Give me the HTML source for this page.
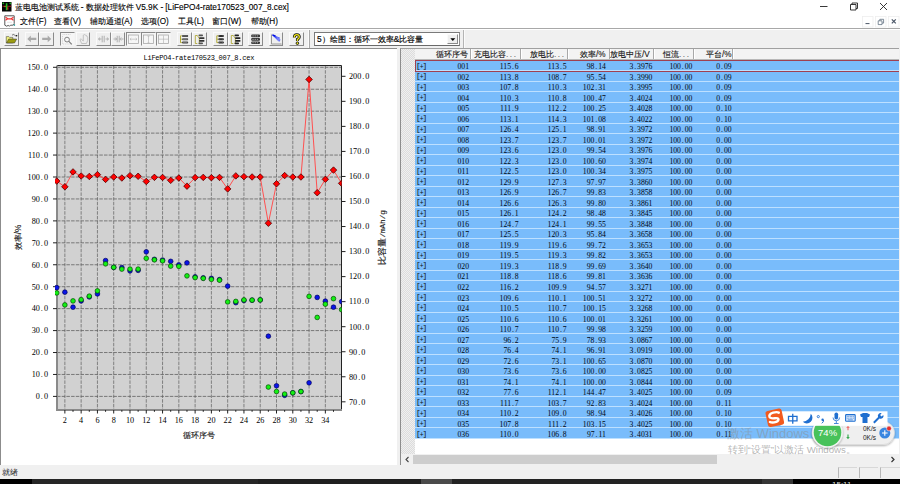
<!DOCTYPE html>
<html><head><meta charset="utf-8">
<style>
html,body{margin:0;padding:0;}
body{width:900px;height:484px;overflow:hidden;position:relative;background:#f0f0f0;font-family:"Liberation Sans",sans-serif;color:#000;}
.abs{position:absolute;}
#title{left:0;top:0;width:900px;height:14px;background:#fff;}
#menu{left:0;top:14px;width:900px;height:14px;background:#fff;}
.ttl{position:absolute;left:15px;top:2px;letter-spacing:-0.05px;font-size:8.3px;line-height:11px;white-space:nowrap;color:#000;-webkit-text-stroke:0.12px #000;}
.mi{position:absolute;top:17px;font-size:8.2px;line-height:10px;white-space:nowrap;color:#000;-webkit-text-stroke:0.12px #000;}
#tb{left:0;top:28px;width:900px;height:20px;background:#f0f0f0;border-top:1px solid #a8a8a8;box-sizing:border-box;}
.btn{position:absolute;top:31.8px;width:14.6px;height:14px;background:#efefef;border-top:1px solid #fafafa;border-left:1px solid #fafafa;border-right:1.3px solid #8a8a8a;border-bottom:1.3px solid #8a8a8a;box-sizing:border-box;}
.btn.dn{border-top:1.5px solid #8a8a8a;border-left:1.5px solid #8a8a8a;border-right:1px solid #f4f4f4;border-bottom:1px solid #f4f4f4;background:#f6f6f6;}
.btn svg{position:absolute;left:0;top:0;}
#lpane{left:0;top:48px;width:397px;height:417px;background:#fff;border-top:1px solid #8c8c8c;border-left:1.5px solid #8c8c8c;box-sizing:border-box;}
#rpane{left:400px;top:48px;width:499px;height:417px;background:#fff;border-top:1px solid #a0a0a0;border-left:1px solid #8c8c8c;box-sizing:border-box;}
#dith{left:401px;top:49px;width:14px;height:405px;background-color:#f0f0f0;background-image:repeating-conic-gradient(#dcdcdc 0 25%,#efefef 0 50%);background-size:2px 2px;}
#hdr{left:415px;top:49px;width:484px;height:10px;background:#f3f3f3;border-bottom:1px solid #b8b8b8;box-sizing:content-box;}
.hd{position:absolute;top:50px;font-size:8.2px;line-height:9px;white-space:nowrap;color:#111;-webkit-text-stroke:0.1px #111;}
.el{letter-spacing:1.6px;color:#666;-webkit-text-stroke:0;}
.hdiv{position:absolute;top:49px;width:1px;height:10px;background:#a8a8a8;border-right:1px solid #fff;}
.row{position:absolute;left:415px;width:484px;height:10.51px;background:#79bcfb;border-bottom:1px solid #bde0ff;box-sizing:border-box;}
.tc{position:absolute;top:2.8px;font-family:"Liberation Serif",serif;font-size:7.7px;line-height:8px;color:#000814;white-space:nowrap;}
.pd{display:inline-block;width:3.8px;text-align:center;}
.ex{position:absolute;left:0.9px;top:1.2px;font-family:"Liberation Mono",monospace;font-size:7.8px;letter-spacing:-0.9px;line-height:8px;color:#111;}
.ex i{font-style:normal;font-size:6.4px;position:relative;top:1px;}
.num{font-family:"Liberation Serif",serif;font-size:8.2px;fill:#000;}
.mono{font-family:"Liberation Mono",monospace;font-size:7px;letter-spacing:-0.25px;fill:#000;}
svg text.cjk{font-family:"Liberation Sans",sans-serif;font-size:8.2px;fill:#111;stroke:#111;stroke-width:0.12px;}
#hs{left:401px;top:454px;width:498px;height:10.5px;background:#f0f0f0;}
#thumb{left:413px;top:455px;width:304px;height:8.5px;background:#cdcdcd;}
#status{left:0;top:465px;width:900px;height:14px;background:#f0f0f0;}
#task{left:0;top:479px;width:900px;height:5px;background:#262626;}
</style></head><body>
<div id="title" class="abs">
  <svg class="abs" style="left:2px;top:2px" width="10" height="10"><rect width="9.5" height="9.5" fill="#050505"/><path d="M0.5 4.3H9.2" stroke="#c02020" stroke-width="0.8"/><path d="M4.6 1.2v7" stroke="#22c022" stroke-width="1.6"/><circle cx="1.3" cy="1.3" r="0.9" fill="#22b022"/><circle cx="8.3" cy="1.3" r="0.9" fill="#22b022"/><path d="M5.8 5.2v2.5" stroke="#e03030" stroke-width="1.1"/><circle cx="3" cy="4.5" r="0.7" fill="#a0a020"/></svg>
  <div class="ttl">蓝电电池测试系统 - 数据处理软件 V5.9K - [LiFePO4-rate170523_007_8.cex]</div>
  <svg class="abs" style="left:815px;top:0" width="85" height="14">
    <path d="M5 6.5H12.5" stroke="#222" stroke-width="0.9"/>
    <path d="M35.5 4.5h5.5v5.5h-5.5z M37 4.5V3h5.5v5.5H41" stroke="#222" stroke-width="0.9" fill="none"/>
    <path d="M65 3L72 10M72 3L65 10" stroke="#222" stroke-width="0.9"/>
  </svg>
</div>
<div id="menu" class="abs">
  <svg class="abs" style="left:4px;top:1px" width="12" height="13"><path d="M0.8 0.8H10.2V8.6L8.8 10.2H6.5L5.5 11.2L4.2 10.4L2.6 11.2L0.8 10.2Z" fill="#fff" stroke="#444" stroke-width="0.9"/><path d="M1.5 2.2L3.8 3.8L1.5 5.2M9.5 2.2L7.2 3.8L9.5 5.2M3.6 3.8H7.4" stroke="#f03030" stroke-width="1.2" fill="none"/><path d="M3 7.3h5" stroke="#ccc" stroke-width="0.5"/><circle cx="10.3" cy="10" r="0.9" fill="#40a0a0"/></svg>
</div>
<div class="mi" style="left:20px">文件(F)</div>
<div class="mi" style="left:54px">查看(V)</div>
<div class="mi" style="left:89.5px">辅助通道(A)</div>
<div class="mi" style="left:141px">选项(O)</div>
<div class="mi" style="left:178px">工具(L)</div>
<div class="mi" style="left:212px">窗口(W)</div>
<div class="mi" style="left:250.5px">帮助(H)</div>
<svg class="abs" style="left:860px;top:15px" width="40" height="13">
  <rect x="2.5" y="1.5" width="10.5" height="10.5" fill="#fff" stroke="#eeeeee" stroke-width="0.8"/>
  <rect x="15.5" y="1.5" width="10.5" height="10.5" fill="#fff" stroke="#eeeeee" stroke-width="0.8"/>
  <rect x="28.5" y="1.5" width="10.5" height="10.5" fill="#fff" stroke="#eeeeee" stroke-width="0.8"/>
  <path d="M5.5 8.6H9.5" stroke="#4a5566" stroke-width="1"/>
  <path d="M18.2 5.8h3.8v3.8h-3.8z M19.8 5.8V4.3h3.8v3.8h-1.6" stroke="#607080" stroke-width="0.8" fill="none"/>
  <path d="M31.8 4.3L35.8 8.3M35.8 4.3L31.8 8.3" stroke="#4a5566" stroke-width="1.2"/>
</svg>
<div id="tb" class="abs"></div>
<svg class="abs" style="left:0;top:29px" width="900" height="2"><path d="M0 0.5H900" stroke="#fff" stroke-width="1"/></svg>
<div class="btn" style="left:4.2px"><svg width="14" height="14" viewBox="0 0 14 14"><path d="M1.3 3.6h2.5l0.8 0.8h3.2v5.5H1.3z" fill="#f2f27a" stroke="#333" stroke-width="0.5"/><path d="M1.5 10l2.2-4h8l-2.2 4z" fill="#9c9c12" stroke="#333" stroke-width="0.5"/><path d="M7 2.3q1.2-1.6 2.4-0.3t2.3 0.4" stroke="#222" stroke-width="0.6" fill="none"/><circle cx="11.6" cy="2.8" r="0.8" fill="#111"/></svg></div>
<div class="btn" style="left:24.7px"><svg width="14" height="14" viewBox="0 0 14 14"><path d="M1.3 5.9l3.5-3.4v2.3h5.5v2.2H4.8v2.3z" fill="#a9a9a9"/></svg></div>
<div class="btn" style="left:39.3px"><svg width="14" height="14" viewBox="0 0 14 14"><path d="M11.2 5.9l-3.5-3.4v2.3H2.2v2.2h5.5v2.3z" fill="#a9a9a9"/></svg></div>
<div class="btn dn" style="left:60.0px"><svg width="14" height="14" viewBox="0 0 14 14"><path d="M1.5 1.5h8M1.5 3v8M2 11h8" stroke="#b0b0b0" stroke-width="0.5" stroke-dasharray="1 0.8"/><circle cx="6" cy="6.6" r="2.4" fill="none" stroke="#777" stroke-width="0.9"/><path d="M7.8 8.4l3 3" stroke="#777" stroke-width="1.1"/></svg></div>
<div class="btn" style="left:75.6px"><svg width="14" height="14" viewBox="0 0 14 14"><path d="M3 6.5l1.6 4h4.8l1.3-3V4.5q0-1-0.8-0.8V3.4q0-1-0.8-0.8q-0.2-0.8-1.1-0.6q-0.4-0.7-1.1-0.2q-0.7 0-0.6 0.9v5.3L4.5 6.3q-1-0.6-1.5 0.2z" fill="none" stroke="#b0b0b0" stroke-width="0.7"/></svg></div>
<div class="btn" style="left:96.0px"><svg width="14" height="14" viewBox="0 0 14 14"><path d="M1.5 6h3M8.5 6h3M5.2 2.8v6.5M7.2 2.8v6.5M1.5 6l1.6-1.5M1.5 6l1.6 1.5M11.5 6l-1.6-1.5M11.5 6l-1.6 1.5" stroke="#a0a0a0" stroke-width="0.8" fill="none"/></svg></div>
<div class="btn" style="left:110.8px"><svg width="14" height="14" viewBox="0 0 14 14"><path d="M1.5 6h3M8.5 6h3M5.2 2.8v6.5M7.2 2.8v6.5M4.7 6l-1.5-1.5M4.7 6l-1.5 1.5M7.7 6l1.5-1.5M7.7 6l1.5 1.5" stroke="#a0a0a0" stroke-width="0.8" fill="none"/></svg></div>
<div class="btn dn" style="left:126.0px"><svg width="14" height="14" viewBox="0 0 14 14"><rect x="1.5" y="2" width="10" height="8.5" fill="none" stroke="#a8a8a8" stroke-width="0.8"/><path d="M3 6.2h7M3 6.2l1.3-1.2M3 6.2l1.3 1.2M10 6.2l-1.3-1.2M10 6.2l-1.3 1.2" stroke="#b0b0b0" stroke-width="0.6" fill="none"/></svg></div>
<div class="btn dn" style="left:141.0px"><svg width="14" height="14" viewBox="0 0 14 14"><rect x="1.5" y="2" width="10" height="8.5" fill="none" stroke="#a8a8a8" stroke-width="0.8"/><path d="M6.5 3v7M5.3 3h2.4M5.3 10h2.4" stroke="#b0b0b0" stroke-width="0.6" fill="none"/></svg></div>
<div class="btn dn" style="left:156.0px"><svg width="14" height="14" viewBox="0 0 14 14"><rect x="1.5" y="2" width="10" height="8.5" fill="none" stroke="#a8a8a8" stroke-width="0.8"/><path d="M6.5 2.5v7.5M2 6.2h9" stroke="#b0b0b0" stroke-width="0.6" fill="none"/></svg></div>
<div class="btn" style="left:177.2px"><svg width="14" height="14" viewBox="0 0 14 14"><path d="M2.5 2.8v6.8M2.5 2.8h1.3M2.5 6.2h1.3M2.5 9.6h1.3" stroke="#a8a020" stroke-width="0.9" fill="none"/><rect x="4" y="2" width="6.2" height="1.9" rx="0.9" fill="#444"/><rect x="4" y="5.3" width="6.2" height="1.9" rx="0.9" fill="#555"/><rect x="4" y="8.6" width="6.2" height="1.9" rx="0.9" fill="#444"/><path d="M5 2.9h4.2M5 6.2h4.2M5 9.5h4.2" stroke="#aaa" stroke-width="0.4"/></svg></div>
<div class="btn" style="left:192.0px"><svg width="14" height="14" viewBox="0 0 14 14"><path d="M2.3 2.5v8h2M2.3 2.5h2l2 3v5" stroke="#a8a020" stroke-width="0.8" fill="none"/><rect x="5.5" y="1.5" width="4.5" height="1.7" rx="0.8" fill="#555"/><rect x="6" y="4.3" width="5.5" height="1.7" rx="0.8" fill="#333"/><rect x="6" y="7" width="5.5" height="1.7" rx="0.8" fill="#333"/><rect x="5.5" y="9.6" width="4.5" height="1.7" rx="0.8" fill="#555"/></svg></div>
<div class="btn" style="left:213.0px"><svg width="14" height="14" viewBox="0 0 14 14"><path d="M2.8 2.8v6.8M2.8 2.8h1.3M2.8 6.2h1.3M2.8 9.6h1.3" stroke="#a8a020" stroke-width="0.9" fill="none"/><rect x="4.3" y="2" width="5.6" height="1.9" rx="0.9" fill="#222"/><rect x="4.3" y="5.3" width="5.6" height="1.9" rx="0.9" fill="#222"/><rect x="4.3" y="8.6" width="5.6" height="1.9" rx="0.9" fill="#222"/><path d="M5.2 2.9h3.8M5.2 6.2h3.8M5.2 9.5h3.8" stroke="#ccc" stroke-width="0.4" stroke-dasharray="0.8 0.6"/></svg></div>
<div class="btn" style="left:228.0px"><svg width="14" height="14" viewBox="0 0 14 14"><path d="M2.3 2.5v8h2M2.3 2.5h2l2 3v5" stroke="#a8a020" stroke-width="0.8" fill="none"/><rect x="5.5" y="1.5" width="4.5" height="1.7" rx="0.8" fill="#222"/><rect x="6" y="4.3" width="5.5" height="1.7" rx="0.8" fill="#222"/><rect x="6" y="7" width="5.5" height="1.7" rx="0.8" fill="#222"/><rect x="5.5" y="9.6" width="4.5" height="1.7" rx="0.8" fill="#222"/></svg></div>
<div class="btn" style="left:248.0px"><svg width="14" height="14" viewBox="0 0 14 14"><rect x="2.2" y="1.6" width="8.8" height="2.7" rx="1" fill="#333"/><rect x="2.2" y="5" width="8.8" height="2.7" rx="1" fill="#333"/><rect x="2.2" y="8.4" width="8.8" height="2.7" rx="1" fill="#333"/><path d="M3.4 2.95h6.4M3.4 6.35h6.4M3.4 9.75h6.4" stroke="#e0e0e0" stroke-width="0.7" stroke-dasharray="1.3 0.9"/></svg></div>
<div class="btn" style="left:268.5px"><svg width="14" height="14" viewBox="0 0 14 14"><path d="M1.5 1.5v9.5h10" stroke="#8a8a8a" stroke-width="0.9" fill="none"/><path d="M2.5 2l7.5 3.2M2.8 2.2l7.6 4.6M3 2.4l7 5.6M3.2 2.6l6 6" stroke="#2030ff" stroke-width="0.7" fill="none"/><path d="M2.5 1.8l3 1.4" stroke="#0010e0" stroke-width="1.4"/><path d="M2.5 11.6h9" stroke="#c4c4c4" stroke-width="0.9"/></svg></div>
<div class="btn" style="left:289.0px"><svg width="14" height="14" viewBox="0 0 14 14"><path d="M4.3 4.4q0-2.8 2.5-2.8t2.5 2.4q0 1.6-1.9 2.4v1.6" stroke="#111" stroke-width="2.9" fill="none"/><path d="M4.3 4.4q0-2.8 2.5-2.8t2.5 2.4q0 1.6-1.9 2.4v1.6" stroke="#f0e818" stroke-width="1.3" fill="none"/><circle cx="7.4" cy="10.2" r="1.3" fill="#f0e818" stroke="#111" stroke-width="0.9"/></svg></div>
<div class="abs" style="left:307.5px;top:30px;width:1px;height:18px;background:#fbfbfb;border-right:1.5px solid #a8a8a8"></div>
<div class="abs" style="left:314px;top:32px;width:145.5px;height:13.5px;background:#fff;border-top:1.3px solid #7a7a7a;border-left:1.3px solid #7a7a7a;border-right:1px solid #8a8a8a;border-bottom:1px solid #6a6a6a;box-sizing:border-box;"></div>
<div class="abs" style="left:462.5px;top:30px;width:1px;height:18px;background:#b4b4b4;border-right:1px solid #fbfbfb"></div>
<div class="abs" style="left:317px;top:34px;font-size:8.4px;line-height:10px;white-space:nowrap;color:#000;-webkit-text-stroke:0.15px #000">5）绘图：循环一效率&amp;比容量</div>
<div class="btn" style="left:446.5px;top:33.8px;width:11px;height:10px"><svg width="10" height="9"><path d="M2.3 3.3h5l-2.5 2.6z" fill="#000"/></svg></div>
<div id="lpane" class="abs"></div>
<div id="rpane" class="abs"></div>
<div id="dith" class="abs"></div>
<div id="hdr" class="abs"></div>
<div class="hd" style="left:435.5px">循环序号</div>
<div class="hdiv" style="left:469.5px"></div>
<div class="hd" style="left:474px">充电比容<span class="el">...</span></div>
<div class="hdiv" style="left:519.5px"></div>
<div class="hd" style="left:530px">放电比<span class="el">...</span></div>
<div class="hdiv" style="left:567px"></div>
<div class="hd" style="left:580px">效率/%</div>
<div class="hdiv" style="left:608.5px"></div>
<div class="hd" style="left:610px">放电中压/V</div>
<div class="hdiv" style="left:652.5px"></div>
<div class="hd" style="left:663px">恒流<span class="el">...</span></div>
<div class="hdiv" style="left:692.5px"></div>
<div class="hd" style="left:706px">平台/%</div>
<div class="hdiv" style="left:731.5px"></div>
<div class="row" style="top:60.50px"><span class="ex">[<i>+</i>]</span><span class="tc" style="right:430.0px">001</span><span class="tc" style="right:380.3px">115<span class="pd">.</span>6</span><span class="tc" style="right:332.3px">113<span class="pd">.</span>5</span><span class="tc" style="right:293.2px">98<span class="pd">.</span>14</span><span class="tc" style="right:246.6px">3<span class="pd">.</span>3976</span><span class="tc" style="right:206.6px">100<span class="pd">.</span>00</span><span class="tc" style="right:167.4px">0<span class="pd">.</span>09</span></div>
<div class="row" style="top:71.01px"><span class="ex">[<i>+</i>]</span><span class="tc" style="right:430.0px">002</span><span class="tc" style="right:380.3px">113<span class="pd">.</span>8</span><span class="tc" style="right:332.3px">108<span class="pd">.</span>7</span><span class="tc" style="right:293.2px">95<span class="pd">.</span>54</span><span class="tc" style="right:246.6px">3<span class="pd">.</span>3990</span><span class="tc" style="right:206.6px">100<span class="pd">.</span>00</span><span class="tc" style="right:167.4px">0<span class="pd">.</span>09</span></div>
<div class="row" style="top:81.52px"><span class="ex">[<i>+</i>]</span><span class="tc" style="right:430.0px">003</span><span class="tc" style="right:380.3px">107<span class="pd">.</span>8</span><span class="tc" style="right:332.3px">110<span class="pd">.</span>3</span><span class="tc" style="right:293.2px">102<span class="pd">.</span>31</span><span class="tc" style="right:246.6px">3<span class="pd">.</span>3995</span><span class="tc" style="right:206.6px">100<span class="pd">.</span>00</span><span class="tc" style="right:167.4px">0<span class="pd">.</span>09</span></div>
<div class="row" style="top:92.03px"><span class="ex">[<i>+</i>]</span><span class="tc" style="right:430.0px">004</span><span class="tc" style="right:380.3px">110<span class="pd">.</span>3</span><span class="tc" style="right:332.3px">110<span class="pd">.</span>8</span><span class="tc" style="right:293.2px">100<span class="pd">.</span>47</span><span class="tc" style="right:246.6px">3<span class="pd">.</span>4024</span><span class="tc" style="right:206.6px">100<span class="pd">.</span>00</span><span class="tc" style="right:167.4px">0<span class="pd">.</span>09</span></div>
<div class="row" style="top:102.54px"><span class="ex">[<i>+</i>]</span><span class="tc" style="right:430.0px">005</span><span class="tc" style="right:380.3px">111<span class="pd">.</span>9</span><span class="tc" style="right:332.3px">112<span class="pd">.</span>2</span><span class="tc" style="right:293.2px">100<span class="pd">.</span>25</span><span class="tc" style="right:246.6px">3<span class="pd">.</span>4028</span><span class="tc" style="right:206.6px">100<span class="pd">.</span>00</span><span class="tc" style="right:167.4px">0<span class="pd">.</span>10</span></div>
<div class="row" style="top:113.05px"><span class="ex">[<i>+</i>]</span><span class="tc" style="right:430.0px">006</span><span class="tc" style="right:380.3px">113<span class="pd">.</span>1</span><span class="tc" style="right:332.3px">114<span class="pd">.</span>3</span><span class="tc" style="right:293.2px">101<span class="pd">.</span>08</span><span class="tc" style="right:246.6px">3<span class="pd">.</span>4022</span><span class="tc" style="right:206.6px">100<span class="pd">.</span>00</span><span class="tc" style="right:167.4px">0<span class="pd">.</span>10</span></div>
<div class="row" style="top:123.56px"><span class="ex">[<i>+</i>]</span><span class="tc" style="right:430.0px">007</span><span class="tc" style="right:380.3px">126<span class="pd">.</span>4</span><span class="tc" style="right:332.3px">125<span class="pd">.</span>1</span><span class="tc" style="right:293.2px">98<span class="pd">.</span>91</span><span class="tc" style="right:246.6px">3<span class="pd">.</span>3972</span><span class="tc" style="right:206.6px">100<span class="pd">.</span>00</span><span class="tc" style="right:167.4px">0<span class="pd">.</span>00</span></div>
<div class="row" style="top:134.07px"><span class="ex">[<i>+</i>]</span><span class="tc" style="right:430.0px">008</span><span class="tc" style="right:380.3px">123<span class="pd">.</span>7</span><span class="tc" style="right:332.3px">123<span class="pd">.</span>7</span><span class="tc" style="right:293.2px">100<span class="pd">.</span>01</span><span class="tc" style="right:246.6px">3<span class="pd">.</span>3972</span><span class="tc" style="right:206.6px">100<span class="pd">.</span>00</span><span class="tc" style="right:167.4px">0<span class="pd">.</span>00</span></div>
<div class="row" style="top:144.58px"><span class="ex">[<i>+</i>]</span><span class="tc" style="right:430.0px">009</span><span class="tc" style="right:380.3px">123<span class="pd">.</span>6</span><span class="tc" style="right:332.3px">123<span class="pd">.</span>0</span><span class="tc" style="right:293.2px">99<span class="pd">.</span>54</span><span class="tc" style="right:246.6px">3<span class="pd">.</span>3976</span><span class="tc" style="right:206.6px">100<span class="pd">.</span>00</span><span class="tc" style="right:167.4px">0<span class="pd">.</span>00</span></div>
<div class="row" style="top:155.09px"><span class="ex">[<i>+</i>]</span><span class="tc" style="right:430.0px">010</span><span class="tc" style="right:380.3px">122<span class="pd">.</span>3</span><span class="tc" style="right:332.3px">123<span class="pd">.</span>0</span><span class="tc" style="right:293.2px">100<span class="pd">.</span>60</span><span class="tc" style="right:246.6px">3<span class="pd">.</span>3974</span><span class="tc" style="right:206.6px">100<span class="pd">.</span>00</span><span class="tc" style="right:167.4px">0<span class="pd">.</span>00</span></div>
<div class="row" style="top:165.60px"><span class="ex">[<i>+</i>]</span><span class="tc" style="right:430.0px">011</span><span class="tc" style="right:380.3px">122<span class="pd">.</span>5</span><span class="tc" style="right:332.3px">123<span class="pd">.</span>0</span><span class="tc" style="right:293.2px">100<span class="pd">.</span>34</span><span class="tc" style="right:246.6px">3<span class="pd">.</span>3975</span><span class="tc" style="right:206.6px">100<span class="pd">.</span>00</span><span class="tc" style="right:167.4px">0<span class="pd">.</span>00</span></div>
<div class="row" style="top:176.11px"><span class="ex">[<i>+</i>]</span><span class="tc" style="right:430.0px">012</span><span class="tc" style="right:380.3px">129<span class="pd">.</span>9</span><span class="tc" style="right:332.3px">127<span class="pd">.</span>3</span><span class="tc" style="right:293.2px">97<span class="pd">.</span>97</span><span class="tc" style="right:246.6px">3<span class="pd">.</span>3860</span><span class="tc" style="right:206.6px">100<span class="pd">.</span>00</span><span class="tc" style="right:167.4px">0<span class="pd">.</span>00</span></div>
<div class="row" style="top:186.62px"><span class="ex">[<i>+</i>]</span><span class="tc" style="right:430.0px">013</span><span class="tc" style="right:380.3px">126<span class="pd">.</span>9</span><span class="tc" style="right:332.3px">126<span class="pd">.</span>7</span><span class="tc" style="right:293.2px">99<span class="pd">.</span>83</span><span class="tc" style="right:246.6px">3<span class="pd">.</span>3858</span><span class="tc" style="right:206.6px">100<span class="pd">.</span>00</span><span class="tc" style="right:167.4px">0<span class="pd">.</span>00</span></div>
<div class="row" style="top:197.13px"><span class="ex">[<i>+</i>]</span><span class="tc" style="right:430.0px">014</span><span class="tc" style="right:380.3px">126<span class="pd">.</span>6</span><span class="tc" style="right:332.3px">126<span class="pd">.</span>3</span><span class="tc" style="right:293.2px">99<span class="pd">.</span>80</span><span class="tc" style="right:246.6px">3<span class="pd">.</span>3861</span><span class="tc" style="right:206.6px">100<span class="pd">.</span>00</span><span class="tc" style="right:167.4px">0<span class="pd">.</span>00</span></div>
<div class="row" style="top:207.64px"><span class="ex">[<i>+</i>]</span><span class="tc" style="right:430.0px">015</span><span class="tc" style="right:380.3px">126<span class="pd">.</span>1</span><span class="tc" style="right:332.3px">124<span class="pd">.</span>2</span><span class="tc" style="right:293.2px">98<span class="pd">.</span>48</span><span class="tc" style="right:246.6px">3<span class="pd">.</span>3845</span><span class="tc" style="right:206.6px">100<span class="pd">.</span>00</span><span class="tc" style="right:167.4px">0<span class="pd">.</span>00</span></div>
<div class="row" style="top:218.15px"><span class="ex">[<i>+</i>]</span><span class="tc" style="right:430.0px">016</span><span class="tc" style="right:380.3px">124<span class="pd">.</span>7</span><span class="tc" style="right:332.3px">124<span class="pd">.</span>1</span><span class="tc" style="right:293.2px">99<span class="pd">.</span>55</span><span class="tc" style="right:246.6px">3<span class="pd">.</span>3848</span><span class="tc" style="right:206.6px">100<span class="pd">.</span>00</span><span class="tc" style="right:167.4px">0<span class="pd">.</span>00</span></div>
<div class="row" style="top:228.66px"><span class="ex">[<i>+</i>]</span><span class="tc" style="right:430.0px">017</span><span class="tc" style="right:380.3px">125<span class="pd">.</span>5</span><span class="tc" style="right:332.3px">120<span class="pd">.</span>3</span><span class="tc" style="right:293.2px">95<span class="pd">.</span>84</span><span class="tc" style="right:246.6px">3<span class="pd">.</span>3658</span><span class="tc" style="right:206.6px">100<span class="pd">.</span>00</span><span class="tc" style="right:167.4px">0<span class="pd">.</span>00</span></div>
<div class="row" style="top:239.17px"><span class="ex">[<i>+</i>]</span><span class="tc" style="right:430.0px">018</span><span class="tc" style="right:380.3px">119<span class="pd">.</span>9</span><span class="tc" style="right:332.3px">119<span class="pd">.</span>6</span><span class="tc" style="right:293.2px">99<span class="pd">.</span>72</span><span class="tc" style="right:246.6px">3<span class="pd">.</span>3653</span><span class="tc" style="right:206.6px">100<span class="pd">.</span>00</span><span class="tc" style="right:167.4px">0<span class="pd">.</span>00</span></div>
<div class="row" style="top:249.68px"><span class="ex">[<i>+</i>]</span><span class="tc" style="right:430.0px">019</span><span class="tc" style="right:380.3px">119<span class="pd">.</span>5</span><span class="tc" style="right:332.3px">119<span class="pd">.</span>3</span><span class="tc" style="right:293.2px">99<span class="pd">.</span>82</span><span class="tc" style="right:246.6px">3<span class="pd">.</span>3653</span><span class="tc" style="right:206.6px">100<span class="pd">.</span>00</span><span class="tc" style="right:167.4px">0<span class="pd">.</span>00</span></div>
<div class="row" style="top:260.19px"><span class="ex">[<i>+</i>]</span><span class="tc" style="right:430.0px">020</span><span class="tc" style="right:380.3px">119<span class="pd">.</span>3</span><span class="tc" style="right:332.3px">118<span class="pd">.</span>9</span><span class="tc" style="right:293.2px">99<span class="pd">.</span>69</span><span class="tc" style="right:246.6px">3<span class="pd">.</span>3640</span><span class="tc" style="right:206.6px">100<span class="pd">.</span>00</span><span class="tc" style="right:167.4px">0<span class="pd">.</span>00</span></div>
<div class="row" style="top:270.70px"><span class="ex">[<i>+</i>]</span><span class="tc" style="right:430.0px">021</span><span class="tc" style="right:380.3px">118<span class="pd">.</span>8</span><span class="tc" style="right:332.3px">118<span class="pd">.</span>6</span><span class="tc" style="right:293.2px">99<span class="pd">.</span>81</span><span class="tc" style="right:246.6px">3<span class="pd">.</span>3636</span><span class="tc" style="right:206.6px">100<span class="pd">.</span>00</span><span class="tc" style="right:167.4px">0<span class="pd">.</span>00</span></div>
<div class="row" style="top:281.21px"><span class="ex">[<i>+</i>]</span><span class="tc" style="right:430.0px">022</span><span class="tc" style="right:380.3px">116<span class="pd">.</span>2</span><span class="tc" style="right:332.3px">109<span class="pd">.</span>9</span><span class="tc" style="right:293.2px">94<span class="pd">.</span>57</span><span class="tc" style="right:246.6px">3<span class="pd">.</span>3271</span><span class="tc" style="right:206.6px">100<span class="pd">.</span>00</span><span class="tc" style="right:167.4px">0<span class="pd">.</span>00</span></div>
<div class="row" style="top:291.72px"><span class="ex">[<i>+</i>]</span><span class="tc" style="right:430.0px">023</span><span class="tc" style="right:380.3px">109<span class="pd">.</span>6</span><span class="tc" style="right:332.3px">110<span class="pd">.</span>1</span><span class="tc" style="right:293.2px">100<span class="pd">.</span>51</span><span class="tc" style="right:246.6px">3<span class="pd">.</span>3272</span><span class="tc" style="right:206.6px">100<span class="pd">.</span>00</span><span class="tc" style="right:167.4px">0<span class="pd">.</span>00</span></div>
<div class="row" style="top:302.23px"><span class="ex">[<i>+</i>]</span><span class="tc" style="right:430.0px">024</span><span class="tc" style="right:380.3px">110<span class="pd">.</span>5</span><span class="tc" style="right:332.3px">110<span class="pd">.</span>7</span><span class="tc" style="right:293.2px">100<span class="pd">.</span>15</span><span class="tc" style="right:246.6px">3<span class="pd">.</span>3268</span><span class="tc" style="right:206.6px">100<span class="pd">.</span>00</span><span class="tc" style="right:167.4px">0<span class="pd">.</span>00</span></div>
<div class="row" style="top:312.74px"><span class="ex">[<i>+</i>]</span><span class="tc" style="right:430.0px">025</span><span class="tc" style="right:380.3px">110<span class="pd">.</span>6</span><span class="tc" style="right:332.3px">110<span class="pd">.</span>6</span><span class="tc" style="right:293.2px">100<span class="pd">.</span>01</span><span class="tc" style="right:246.6px">3<span class="pd">.</span>3261</span><span class="tc" style="right:206.6px">100<span class="pd">.</span>00</span><span class="tc" style="right:167.4px">0<span class="pd">.</span>00</span></div>
<div class="row" style="top:323.25px"><span class="ex">[<i>+</i>]</span><span class="tc" style="right:430.0px">026</span><span class="tc" style="right:380.3px">110<span class="pd">.</span>7</span><span class="tc" style="right:332.3px">110<span class="pd">.</span>7</span><span class="tc" style="right:293.2px">99<span class="pd">.</span>98</span><span class="tc" style="right:246.6px">3<span class="pd">.</span>3259</span><span class="tc" style="right:206.6px">100<span class="pd">.</span>00</span><span class="tc" style="right:167.4px">0<span class="pd">.</span>00</span></div>
<div class="row" style="top:333.76px"><span class="ex">[<i>+</i>]</span><span class="tc" style="right:430.0px">027</span><span class="tc" style="right:380.3px">96<span class="pd">.</span>2</span><span class="tc" style="right:332.3px">75<span class="pd">.</span>9</span><span class="tc" style="right:293.2px">78<span class="pd">.</span>93</span><span class="tc" style="right:246.6px">3<span class="pd">.</span>0867</span><span class="tc" style="right:206.6px">100<span class="pd">.</span>00</span><span class="tc" style="right:167.4px">0<span class="pd">.</span>00</span></div>
<div class="row" style="top:344.27px"><span class="ex">[<i>+</i>]</span><span class="tc" style="right:430.0px">028</span><span class="tc" style="right:380.3px">76<span class="pd">.</span>4</span><span class="tc" style="right:332.3px">74<span class="pd">.</span>1</span><span class="tc" style="right:293.2px">96<span class="pd">.</span>91</span><span class="tc" style="right:246.6px">3<span class="pd">.</span>0919</span><span class="tc" style="right:206.6px">100<span class="pd">.</span>00</span><span class="tc" style="right:167.4px">0<span class="pd">.</span>00</span></div>
<div class="row" style="top:354.78px"><span class="ex">[<i>+</i>]</span><span class="tc" style="right:430.0px">029</span><span class="tc" style="right:380.3px">72<span class="pd">.</span>6</span><span class="tc" style="right:332.3px">73<span class="pd">.</span>1</span><span class="tc" style="right:293.2px">100<span class="pd">.</span>65</span><span class="tc" style="right:246.6px">3<span class="pd">.</span>0870</span><span class="tc" style="right:206.6px">100<span class="pd">.</span>00</span><span class="tc" style="right:167.4px">0<span class="pd">.</span>00</span></div>
<div class="row" style="top:365.29px"><span class="ex">[<i>+</i>]</span><span class="tc" style="right:430.0px">030</span><span class="tc" style="right:380.3px">73<span class="pd">.</span>6</span><span class="tc" style="right:332.3px">73<span class="pd">.</span>6</span><span class="tc" style="right:293.2px">100<span class="pd">.</span>00</span><span class="tc" style="right:246.6px">3<span class="pd">.</span>0825</span><span class="tc" style="right:206.6px">100<span class="pd">.</span>00</span><span class="tc" style="right:167.4px">0<span class="pd">.</span>00</span></div>
<div class="row" style="top:375.80px"><span class="ex">[<i>+</i>]</span><span class="tc" style="right:430.0px">031</span><span class="tc" style="right:380.3px">74<span class="pd">.</span>1</span><span class="tc" style="right:332.3px">74<span class="pd">.</span>1</span><span class="tc" style="right:293.2px">100<span class="pd">.</span>00</span><span class="tc" style="right:246.6px">3<span class="pd">.</span>0844</span><span class="tc" style="right:206.6px">100<span class="pd">.</span>00</span><span class="tc" style="right:167.4px">0<span class="pd">.</span>00</span></div>
<div class="row" style="top:386.31px"><span class="ex">[<i>+</i>]</span><span class="tc" style="right:430.0px">032</span><span class="tc" style="right:380.3px">77<span class="pd">.</span>6</span><span class="tc" style="right:332.3px">112<span class="pd">.</span>1</span><span class="tc" style="right:293.2px">144<span class="pd">.</span>47</span><span class="tc" style="right:246.6px">3<span class="pd">.</span>4025</span><span class="tc" style="right:206.6px">100<span class="pd">.</span>00</span><span class="tc" style="right:167.4px">0<span class="pd">.</span>09</span></div>
<div class="row" style="top:396.82px"><span class="ex">[<i>+</i>]</span><span class="tc" style="right:430.0px">033</span><span class="tc" style="right:380.3px">111<span class="pd">.</span>7</span><span class="tc" style="right:332.3px">103<span class="pd">.</span>7</span><span class="tc" style="right:293.2px">92<span class="pd">.</span>83</span><span class="tc" style="right:246.6px">3<span class="pd">.</span>4024</span><span class="tc" style="right:206.6px">100<span class="pd">.</span>00</span><span class="tc" style="right:167.4px">0<span class="pd">.</span>11</span></div>
<div class="row" style="top:407.33px"><span class="ex">[<i>+</i>]</span><span class="tc" style="right:430.0px">034</span><span class="tc" style="right:380.3px">110<span class="pd">.</span>2</span><span class="tc" style="right:332.3px">109<span class="pd">.</span>0</span><span class="tc" style="right:293.2px">98<span class="pd">.</span>94</span><span class="tc" style="right:246.6px">3<span class="pd">.</span>4026</span><span class="tc" style="right:206.6px">100<span class="pd">.</span>00</span><span class="tc" style="right:167.4px">0<span class="pd">.</span>10</span></div>
<div class="row" style="top:417.84px"><span class="ex">[<i>+</i>]</span><span class="tc" style="right:430.0px">035</span><span class="tc" style="right:380.3px">107<span class="pd">.</span>8</span><span class="tc" style="right:332.3px">111<span class="pd">.</span>2</span><span class="tc" style="right:293.2px">103<span class="pd">.</span>15</span><span class="tc" style="right:246.6px">3<span class="pd">.</span>4025</span><span class="tc" style="right:206.6px">100<span class="pd">.</span>00</span><span class="tc" style="right:167.4px">0<span class="pd">.</span>10</span></div>
<div class="row" style="top:428.35px"><span class="ex">[<i>+</i>]</span><span class="tc" style="right:430.0px">036</span><span class="tc" style="right:380.3px">110<span class="pd">.</span>0</span><span class="tc" style="right:332.3px">106<span class="pd">.</span>8</span><span class="tc" style="right:293.2px">97<span class="pd">.</span>11</span><span class="tc" style="right:246.6px">3<span class="pd">.</span>4031</span><span class="tc" style="right:206.6px">100<span class="pd">.</span>00</span><span class="tc" style="right:167.4px">0<span class="pd">.</span>11</span></div>
<div class="abs" style="left:415px;top:60px;width:484px;height:11.5px;border:1px solid #a04050;border-right:none;box-sizing:border-box;"></div>
<div id="hs" class="abs"></div>
<div id="thumb" class="abs"></div>
<svg class="abs" style="left:0;top:0" width="900" height="484" viewBox="0 0 900 484">
<defs><clipPath id="pc"><rect x="55.0" y="65.5" width="286.5" height="344.5"/></clipPath></defs>
<rect x="57.0" y="65.5" width="284.5" height="344.5" fill="#d1d1d1"/>
<path d="M57.0 396.40H341.5M57.0 374.46H341.5M57.0 352.52H341.5M57.0 330.58H341.5M57.0 308.64H341.5M57.0 286.70H341.5M57.0 264.76H341.5M57.0 242.82H341.5M57.0 220.88H341.5M57.0 198.94H341.5M57.0 177.00H341.5M57.0 155.06H341.5M57.0 133.12H341.5M57.0 111.18H341.5M57.0 89.24H341.5M57.0 67.30H341.5" stroke="#555" stroke-width="0.72" stroke-dasharray="3.5 1.2" fill="none"/>
<path d="M64.87 65.5V410.0M81.15 65.5V410.0M97.43 65.5V410.0M113.71 65.5V410.0M129.99 65.5V410.0M146.27 65.5V410.0M162.55 65.5V410.0M178.83 65.5V410.0M195.11 65.5V410.0M211.39 65.5V410.0M227.67 65.5V410.0M243.95 65.5V410.0M260.23 65.5V410.0M276.51 65.5V410.0M292.79 65.5V410.0M309.07 65.5V410.0M325.35 65.5V410.0" stroke="#606060" stroke-width="0.72" stroke-dasharray="3.5 1.2" fill="none"/>
<path d="M57.0 65.5H341.5V410.0" stroke="#222" stroke-width="1" fill="none"/>
<path d="M57.0 65.5V410.0H342.0" stroke="#8a8a8a" stroke-width="2" fill="none"/>
<path d="M53 396.40H57M53 374.46H57M53 352.52H57M53 330.58H57M53 308.64H57M53 286.70H57M53 264.76H57M53 242.82H57M53 220.88H57M53 198.94H57M53 177.00H57M53 155.06H57M53 133.12H57M53 111.18H57M53 89.24H57M53 67.30H57M341.5 76.30H345.5M341.5 101.34H345.5M341.5 126.38H345.5M341.5 151.42H345.5M341.5 176.46H345.5M341.5 201.50H345.5M341.5 226.54H345.5M341.5 251.58H345.5M341.5 276.62H345.5M341.5 301.66H345.5M341.5 326.70H345.5M341.5 351.74H345.5M341.5 376.78H345.5M341.5 401.82H345.5M64.87 410V413.5M73.01 410V411.8M81.15 410V413.5M89.29 410V411.8M97.43 410V413.5M105.57 410V411.8M113.71 410V413.5M121.85 410V411.8M129.99 410V413.5M138.13 410V411.8M146.27 410V413.5M154.41 410V411.8M162.55 410V413.5M170.69 410V411.8M178.83 410V413.5M186.97 410V411.8M195.11 410V413.5M203.25 410V411.8M211.39 410V413.5M219.53 410V411.8M227.67 410V413.5M235.81 410V411.8M243.95 410V413.5M252.09 410V411.8M260.23 410V413.5M268.37 410V411.8M276.51 410V413.5M284.65 410V411.8M292.79 410V413.5M300.93 410V411.8M309.07 410V413.5M317.21 410V411.8M325.35 410V413.5M333.49 410V411.8" stroke="#222" stroke-width="1" fill="none"/>
<g class="num"><text x="48" y="399.20" text-anchor="end">0<tspan dx="1">.</tspan><tspan dx="1">0</tspan></text><text x="48" y="377.26" text-anchor="end">10<tspan dx="1">.</tspan><tspan dx="1">0</tspan></text><text x="48" y="355.32" text-anchor="end">20<tspan dx="1">.</tspan><tspan dx="1">0</tspan></text><text x="48" y="333.38" text-anchor="end">30<tspan dx="1">.</tspan><tspan dx="1">0</tspan></text><text x="48" y="311.44" text-anchor="end">40<tspan dx="1">.</tspan><tspan dx="1">0</tspan></text><text x="48" y="289.50" text-anchor="end">50<tspan dx="1">.</tspan><tspan dx="1">0</tspan></text><text x="48" y="267.56" text-anchor="end">60<tspan dx="1">.</tspan><tspan dx="1">0</tspan></text><text x="48" y="245.62" text-anchor="end">70<tspan dx="1">.</tspan><tspan dx="1">0</tspan></text><text x="48" y="223.68" text-anchor="end">80<tspan dx="1">.</tspan><tspan dx="1">0</tspan></text><text x="48" y="201.74" text-anchor="end">90<tspan dx="1">.</tspan><tspan dx="1">0</tspan></text><text x="48" y="179.80" text-anchor="end">100<tspan dx="1">.</tspan><tspan dx="1">0</tspan></text><text x="48" y="157.86" text-anchor="end">110<tspan dx="1">.</tspan><tspan dx="1">0</tspan></text><text x="48" y="135.92" text-anchor="end">120<tspan dx="1">.</tspan><tspan dx="1">0</tspan></text><text x="48" y="113.98" text-anchor="end">130<tspan dx="1">.</tspan><tspan dx="1">0</tspan></text><text x="48" y="92.04" text-anchor="end">140<tspan dx="1">.</tspan><tspan dx="1">0</tspan></text><text x="48" y="70.10" text-anchor="end">150<tspan dx="1">.</tspan><tspan dx="1">0</tspan></text><text x="349" y="79.10">200<tspan dx="1">.</tspan><tspan dx="1">0</tspan></text><text x="349" y="104.14">190<tspan dx="1">.</tspan><tspan dx="1">0</tspan></text><text x="349" y="129.18">180<tspan dx="1">.</tspan><tspan dx="1">0</tspan></text><text x="349" y="154.22">170<tspan dx="1">.</tspan><tspan dx="1">0</tspan></text><text x="349" y="179.26">160<tspan dx="1">.</tspan><tspan dx="1">0</tspan></text><text x="349" y="204.30">150<tspan dx="1">.</tspan><tspan dx="1">0</tspan></text><text x="349" y="229.34">140<tspan dx="1">.</tspan><tspan dx="1">0</tspan></text><text x="349" y="254.38">130<tspan dx="1">.</tspan><tspan dx="1">0</tspan></text><text x="349" y="279.42">120<tspan dx="1">.</tspan><tspan dx="1">0</tspan></text><text x="349" y="304.46">110<tspan dx="1">.</tspan><tspan dx="1">0</tspan></text><text x="349" y="329.50">100<tspan dx="1">.</tspan><tspan dx="1">0</tspan></text><text x="349" y="354.54">90<tspan dx="1">.</tspan><tspan dx="1">0</tspan></text><text x="349" y="379.58">80<tspan dx="1">.</tspan><tspan dx="1">0</tspan></text><text x="349" y="404.62">70<tspan dx="1">.</tspan><tspan dx="1">0</tspan></text><text x="64.87" y="422.5" text-anchor="middle">2</text><text x="81.15" y="422.5" text-anchor="middle">4</text><text x="97.43" y="422.5" text-anchor="middle">6</text><text x="113.71" y="422.5" text-anchor="middle">8</text><text x="129.99" y="422.5" text-anchor="middle">10</text><text x="146.27" y="422.5" text-anchor="middle">12</text><text x="162.55" y="422.5" text-anchor="middle">14</text><text x="178.83" y="422.5" text-anchor="middle">16</text><text x="195.11" y="422.5" text-anchor="middle">18</text><text x="211.39" y="422.5" text-anchor="middle">20</text><text x="227.67" y="422.5" text-anchor="middle">22</text><text x="243.95" y="422.5" text-anchor="middle">24</text><text x="260.23" y="422.5" text-anchor="middle">26</text><text x="276.51" y="422.5" text-anchor="middle">28</text><text x="292.79" y="422.5" text-anchor="middle">30</text><text x="309.07" y="422.5" text-anchor="middle">32</text><text x="325.35" y="422.5" text-anchor="middle">34</text></g>
<text class="mono" x="198.8" y="60.3" text-anchor="middle">LiFePO4-rate170523_007_8.cex</text>
<text class="cjk" x="199" y="438.3" text-anchor="middle">循环序号</text>
<text class="cjk" transform="translate(21,237.5) rotate(-90)" text-anchor="middle">效率/%</text>
<text class="cjk" transform="translate(384.8,237.4) rotate(-90)" text-anchor="middle" style="font-size:8.8px">比容量<tspan style="font-family:'Liberation Mono',monospace;font-size:7.6px">/mAh/g</tspan></text>
<g clip-path="url(#pc)"><circle cx="56.73" cy="287.64" r="2.35" fill="#0a14e8" stroke="#000050" stroke-width="0.65"/><circle cx="64.87" cy="292.14" r="2.35" fill="#0a14e8" stroke="#000050" stroke-width="0.65"/><circle cx="73.01" cy="307.17" r="2.35" fill="#0a14e8" stroke="#000050" stroke-width="0.65"/><circle cx="81.15" cy="300.91" r="2.35" fill="#0a14e8" stroke="#000050" stroke-width="0.65"/><circle cx="89.29" cy="296.90" r="2.35" fill="#0a14e8" stroke="#000050" stroke-width="0.65"/><circle cx="97.43" cy="293.90" r="2.35" fill="#0a14e8" stroke="#000050" stroke-width="0.65"/><circle cx="105.57" cy="260.59" r="2.35" fill="#0a14e8" stroke="#000050" stroke-width="0.65"/><circle cx="113.71" cy="267.36" r="2.35" fill="#0a14e8" stroke="#000050" stroke-width="0.65"/><circle cx="121.85" cy="267.61" r="2.35" fill="#0a14e8" stroke="#000050" stroke-width="0.65"/><circle cx="129.99" cy="270.86" r="2.35" fill="#0a14e8" stroke="#000050" stroke-width="0.65"/><circle cx="138.13" cy="270.36" r="2.35" fill="#0a14e8" stroke="#000050" stroke-width="0.65"/><circle cx="146.27" cy="251.83" r="2.35" fill="#0a14e8" stroke="#000050" stroke-width="0.65"/><circle cx="154.41" cy="259.34" r="2.35" fill="#0a14e8" stroke="#000050" stroke-width="0.65"/><circle cx="162.55" cy="260.09" r="2.35" fill="#0a14e8" stroke="#000050" stroke-width="0.65"/><circle cx="170.69" cy="261.35" r="2.35" fill="#0a14e8" stroke="#000050" stroke-width="0.65"/><circle cx="178.83" cy="264.85" r="2.35" fill="#0a14e8" stroke="#000050" stroke-width="0.65"/><circle cx="186.97" cy="262.85" r="2.35" fill="#0a14e8" stroke="#000050" stroke-width="0.65"/><circle cx="195.11" cy="276.87" r="2.35" fill="#0a14e8" stroke="#000050" stroke-width="0.65"/><circle cx="203.25" cy="277.87" r="2.35" fill="#0a14e8" stroke="#000050" stroke-width="0.65"/><circle cx="211.39" cy="278.37" r="2.35" fill="#0a14e8" stroke="#000050" stroke-width="0.65"/><circle cx="219.53" cy="279.62" r="2.35" fill="#0a14e8" stroke="#000050" stroke-width="0.65"/><circle cx="227.67" cy="286.14" r="2.35" fill="#0a14e8" stroke="#000050" stroke-width="0.65"/><circle cx="235.81" cy="302.66" r="2.35" fill="#0a14e8" stroke="#000050" stroke-width="0.65"/><circle cx="243.95" cy="300.41" r="2.35" fill="#0a14e8" stroke="#000050" stroke-width="0.65"/><circle cx="252.09" cy="300.16" r="2.35" fill="#0a14e8" stroke="#000050" stroke-width="0.65"/><circle cx="260.23" cy="299.91" r="2.35" fill="#0a14e8" stroke="#000050" stroke-width="0.65"/><circle cx="268.37" cy="336.22" r="2.35" fill="#0a14e8" stroke="#000050" stroke-width="0.65"/><circle cx="276.51" cy="385.79" r="2.35" fill="#0a14e8" stroke="#000050" stroke-width="0.65"/><circle cx="284.65" cy="395.31" r="2.35" fill="#0a14e8" stroke="#000050" stroke-width="0.65"/><circle cx="292.79" cy="392.81" r="2.35" fill="#0a14e8" stroke="#000050" stroke-width="0.65"/><circle cx="300.93" cy="391.55" r="2.35" fill="#0a14e8" stroke="#000050" stroke-width="0.65"/><circle cx="309.07" cy="382.79" r="2.35" fill="#0a14e8" stroke="#000050" stroke-width="0.65"/><circle cx="317.21" cy="297.40" r="2.35" fill="#0a14e8" stroke="#000050" stroke-width="0.65"/><circle cx="325.35" cy="301.16" r="2.35" fill="#0a14e8" stroke="#000050" stroke-width="0.65"/><circle cx="333.49" cy="307.17" r="2.35" fill="#0a14e8" stroke="#000050" stroke-width="0.65"/><circle cx="341.63" cy="301.66" r="2.35" fill="#0a14e8" stroke="#000050" stroke-width="0.65"/><circle cx="56.73" cy="292.90" r="2.35" fill="#14f014" stroke="#004000" stroke-width="0.65"/><circle cx="64.87" cy="304.92" r="2.35" fill="#14f014" stroke="#004000" stroke-width="0.65"/><circle cx="73.01" cy="300.91" r="2.35" fill="#14f014" stroke="#004000" stroke-width="0.65"/><circle cx="81.15" cy="299.66" r="2.35" fill="#14f014" stroke="#004000" stroke-width="0.65"/><circle cx="89.29" cy="296.15" r="2.35" fill="#14f014" stroke="#004000" stroke-width="0.65"/><circle cx="97.43" cy="290.89" r="2.35" fill="#14f014" stroke="#004000" stroke-width="0.65"/><circle cx="105.57" cy="263.85" r="2.35" fill="#14f014" stroke="#004000" stroke-width="0.65"/><circle cx="113.71" cy="267.36" r="2.35" fill="#14f014" stroke="#004000" stroke-width="0.65"/><circle cx="121.85" cy="269.11" r="2.35" fill="#14f014" stroke="#004000" stroke-width="0.65"/><circle cx="129.99" cy="269.11" r="2.35" fill="#14f014" stroke="#004000" stroke-width="0.65"/><circle cx="138.13" cy="269.11" r="2.35" fill="#14f014" stroke="#004000" stroke-width="0.65"/><circle cx="146.27" cy="258.34" r="2.35" fill="#14f014" stroke="#004000" stroke-width="0.65"/><circle cx="154.41" cy="259.84" r="2.35" fill="#14f014" stroke="#004000" stroke-width="0.65"/><circle cx="162.55" cy="260.84" r="2.35" fill="#14f014" stroke="#004000" stroke-width="0.65"/><circle cx="170.69" cy="266.10" r="2.35" fill="#14f014" stroke="#004000" stroke-width="0.65"/><circle cx="178.83" cy="266.35" r="2.35" fill="#14f014" stroke="#004000" stroke-width="0.65"/><circle cx="186.97" cy="275.87" r="2.35" fill="#14f014" stroke="#004000" stroke-width="0.65"/><circle cx="195.11" cy="277.62" r="2.35" fill="#14f014" stroke="#004000" stroke-width="0.65"/><circle cx="203.25" cy="278.37" r="2.35" fill="#14f014" stroke="#004000" stroke-width="0.65"/><circle cx="211.39" cy="279.37" r="2.35" fill="#14f014" stroke="#004000" stroke-width="0.65"/><circle cx="219.53" cy="280.13" r="2.35" fill="#14f014" stroke="#004000" stroke-width="0.65"/><circle cx="227.67" cy="301.91" r="2.35" fill="#14f014" stroke="#004000" stroke-width="0.65"/><circle cx="235.81" cy="301.41" r="2.35" fill="#14f014" stroke="#004000" stroke-width="0.65"/><circle cx="243.95" cy="299.91" r="2.35" fill="#14f014" stroke="#004000" stroke-width="0.65"/><circle cx="252.09" cy="300.16" r="2.35" fill="#14f014" stroke="#004000" stroke-width="0.65"/><circle cx="260.23" cy="299.91" r="2.35" fill="#14f014" stroke="#004000" stroke-width="0.65"/><circle cx="268.37" cy="387.05" r="2.35" fill="#14f014" stroke="#004000" stroke-width="0.65"/><circle cx="276.51" cy="391.55" r="2.35" fill="#14f014" stroke="#004000" stroke-width="0.65"/><circle cx="284.65" cy="394.06" r="2.35" fill="#14f014" stroke="#004000" stroke-width="0.65"/><circle cx="292.79" cy="392.81" r="2.35" fill="#14f014" stroke="#004000" stroke-width="0.65"/><circle cx="300.93" cy="391.55" r="2.35" fill="#14f014" stroke="#004000" stroke-width="0.65"/><circle cx="309.07" cy="296.40" r="2.35" fill="#14f014" stroke="#004000" stroke-width="0.65"/><circle cx="317.21" cy="317.44" r="2.35" fill="#14f014" stroke="#004000" stroke-width="0.65"/><circle cx="325.35" cy="304.16" r="2.35" fill="#14f014" stroke="#004000" stroke-width="0.65"/><circle cx="333.49" cy="298.66" r="2.35" fill="#14f014" stroke="#004000" stroke-width="0.65"/><circle cx="341.63" cy="309.67" r="2.35" fill="#14f014" stroke="#004000" stroke-width="0.65"/><path d="M56.73 181.08 L64.87 186.79 L73.01 171.93 L81.15 175.97 L89.29 176.45 L97.43 174.63 L105.57 179.39 L113.71 176.98 L121.85 178.01 L129.99 175.68 L138.13 176.25 L146.27 181.45 L154.41 177.37 L162.55 177.44 L170.69 180.33 L178.83 177.99 L186.97 186.13 L195.11 177.61 L203.25 177.39 L211.39 177.68 L219.53 177.42 L227.67 188.91 L235.81 175.88 L243.95 176.67 L252.09 176.98 L260.23 177.04 L268.37 223.23 L276.51 183.78 L284.65 175.57 L292.79 177.00 L300.93 177.00 L309.07 79.43 L317.21 192.73 L325.35 179.33 L333.49 170.09 L341.63 183.34" stroke="#ff5050" stroke-width="1" fill="none"/><path d="M56.73 177.83L59.98 181.08L56.73 184.33L53.48 181.08Z" fill="#ff0000" stroke="#500000" stroke-width="0.8"/><path d="M64.87 183.54L68.12 186.79L64.87 190.04L61.62 186.79Z" fill="#ff0000" stroke="#500000" stroke-width="0.8"/><path d="M73.01 168.68L76.26 171.93L73.01 175.18L69.76 171.93Z" fill="#ff0000" stroke="#500000" stroke-width="0.8"/><path d="M81.15 172.72L84.40 175.97L81.15 179.22L77.90 175.97Z" fill="#ff0000" stroke="#500000" stroke-width="0.8"/><path d="M89.29 173.20L92.54 176.45L89.29 179.70L86.04 176.45Z" fill="#ff0000" stroke="#500000" stroke-width="0.8"/><path d="M97.43 171.38L100.68 174.63L97.43 177.88L94.18 174.63Z" fill="#ff0000" stroke="#500000" stroke-width="0.8"/><path d="M105.57 176.14L108.82 179.39L105.57 182.64L102.32 179.39Z" fill="#ff0000" stroke="#500000" stroke-width="0.8"/><path d="M113.71 173.73L116.96 176.98L113.71 180.23L110.46 176.98Z" fill="#ff0000" stroke="#500000" stroke-width="0.8"/><path d="M121.85 174.76L125.10 178.01L121.85 181.26L118.60 178.01Z" fill="#ff0000" stroke="#500000" stroke-width="0.8"/><path d="M129.99 172.43L133.24 175.68L129.99 178.93L126.74 175.68Z" fill="#ff0000" stroke="#500000" stroke-width="0.8"/><path d="M138.13 173.00L141.38 176.25L138.13 179.50L134.88 176.25Z" fill="#ff0000" stroke="#500000" stroke-width="0.8"/><path d="M146.27 178.20L149.52 181.45L146.27 184.70L143.02 181.45Z" fill="#ff0000" stroke="#500000" stroke-width="0.8"/><path d="M154.41 174.12L157.66 177.37L154.41 180.62L151.16 177.37Z" fill="#ff0000" stroke="#500000" stroke-width="0.8"/><path d="M162.55 174.19L165.80 177.44L162.55 180.69L159.30 177.44Z" fill="#ff0000" stroke="#500000" stroke-width="0.8"/><path d="M170.69 177.08L173.94 180.33L170.69 183.58L167.44 180.33Z" fill="#ff0000" stroke="#500000" stroke-width="0.8"/><path d="M178.83 174.74L182.08 177.99L178.83 181.24L175.58 177.99Z" fill="#ff0000" stroke="#500000" stroke-width="0.8"/><path d="M186.97 182.88L190.22 186.13L186.97 189.38L183.72 186.13Z" fill="#ff0000" stroke="#500000" stroke-width="0.8"/><path d="M195.11 174.36L198.36 177.61L195.11 180.86L191.86 177.61Z" fill="#ff0000" stroke="#500000" stroke-width="0.8"/><path d="M203.25 174.14L206.50 177.39L203.25 180.64L200.00 177.39Z" fill="#ff0000" stroke="#500000" stroke-width="0.8"/><path d="M211.39 174.43L214.64 177.68L211.39 180.93L208.14 177.68Z" fill="#ff0000" stroke="#500000" stroke-width="0.8"/><path d="M219.53 174.17L222.78 177.42L219.53 180.67L216.28 177.42Z" fill="#ff0000" stroke="#500000" stroke-width="0.8"/><path d="M227.67 185.66L230.92 188.91L227.67 192.16L224.42 188.91Z" fill="#ff0000" stroke="#500000" stroke-width="0.8"/><path d="M235.81 172.63L239.06 175.88L235.81 179.13L232.56 175.88Z" fill="#ff0000" stroke="#500000" stroke-width="0.8"/><path d="M243.95 173.42L247.20 176.67L243.95 179.92L240.70 176.67Z" fill="#ff0000" stroke="#500000" stroke-width="0.8"/><path d="M252.09 173.73L255.34 176.98L252.09 180.23L248.84 176.98Z" fill="#ff0000" stroke="#500000" stroke-width="0.8"/><path d="M260.23 173.79L263.48 177.04L260.23 180.29L256.98 177.04Z" fill="#ff0000" stroke="#500000" stroke-width="0.8"/><path d="M268.37 219.98L271.62 223.23L268.37 226.48L265.12 223.23Z" fill="#ff0000" stroke="#500000" stroke-width="0.8"/><path d="M276.51 180.53L279.76 183.78L276.51 187.03L273.26 183.78Z" fill="#ff0000" stroke="#500000" stroke-width="0.8"/><path d="M284.65 172.32L287.90 175.57L284.65 178.82L281.40 175.57Z" fill="#ff0000" stroke="#500000" stroke-width="0.8"/><path d="M292.79 173.75L296.04 177.00L292.79 180.25L289.54 177.00Z" fill="#ff0000" stroke="#500000" stroke-width="0.8"/><path d="M300.93 173.75L304.18 177.00L300.93 180.25L297.68 177.00Z" fill="#ff0000" stroke="#500000" stroke-width="0.8"/><path d="M309.07 76.18L312.32 79.43L309.07 82.68L305.82 79.43Z" fill="#ff0000" stroke="#500000" stroke-width="0.8"/><path d="M317.21 189.48L320.46 192.73L317.21 195.98L313.96 192.73Z" fill="#ff0000" stroke="#500000" stroke-width="0.8"/><path d="M325.35 176.08L328.60 179.33L325.35 182.58L322.10 179.33Z" fill="#ff0000" stroke="#500000" stroke-width="0.8"/><path d="M333.49 166.84L336.74 170.09L333.49 173.34L330.24 170.09Z" fill="#ff0000" stroke="#500000" stroke-width="0.8"/><path d="M341.63 180.09L344.88 183.34L341.63 186.59L338.38 183.34Z" fill="#ff0000" stroke="#500000" stroke-width="0.8"/></g>
</svg>
<div id="status" class="abs"></div>
<div class="abs" style="left:1.5px;top:468px;font-size:8.2px;line-height:10px;color:#222">就绪</div>
<div id="task" class="abs"></div>
<div class="abs" style="left:0;top:479px;width:32px;height:5px;background:#000"></div>
<div class="abs" style="left:258px;top:479px;width:163px;height:5px;background:#1f1f1f"></div>
<div class="abs" style="left:421px;top:479px;width:31px;height:5px;background:#4a4a4a"></div>
<div class="abs" style="left:452px;top:479px;width:310px;height:5px;background:#232323"></div>
<div class="abs" style="left:762px;top:479px;width:31px;height:5px;background:#363636"></div>
<div class="abs" style="left:793px;top:479px;width:107px;height:5px;background:#000"></div>
<div class="abs" style="left:832px;top:481px;font-size:8px;line-height:8px;color:#ddd">15:11</div>
<!-- status panels -->
<div class="abs" style="left:838px;top:467px;width:19px;height:11px;border-left:1px solid #b8b8b8;border-top:1px solid #d8d8d8;box-sizing:border-box"></div>
<div class="abs" style="left:859px;top:467px;width:19px;height:11px;border-left:1px solid #b8b8b8;border-top:1px solid #d8d8d8;box-sizing:border-box"></div>
<div class="abs" style="left:880px;top:467px;width:20px;height:11px;border-left:1px solid #b8b8b8;border-top:1px solid #d8d8d8;box-sizing:border-box"></div>
<!-- watermark -->
<div class="abs" style="left:727px;top:425.5px;font-size:13px;line-height:15px;color:rgba(140,140,140,0.5);white-space:nowrap">激活 Windows</div>
<div class="abs" style="left:727.5px;top:443.5px;font-size:9.7px;line-height:11px;color:rgba(150,150,150,0.7);white-space:nowrap">转到“设置”以激活 Windows。</div>
<!-- IME / speed widget -->
<svg class="abs" style="left:760px;top:402px" width="140" height="50" viewBox="760 402 140 50">
  <defs>
    <filter id="sh" x="-20%" y="-20%" width="140%" height="160%"><feGaussianBlur in="SourceAlpha" stdDeviation="1.2"/><feOffset dy="1"/><feComponentTransfer><feFuncA type="linear" slope="0.35"/></feComponentTransfer><feMerge><feMergeNode/><feMergeNode in="SourceGraphic"/></feMerge></filter>
  </defs>
  <rect x="812" y="421.5" width="82.5" height="23" rx="11.5" fill="#efefef" stroke="#d8d8d8" stroke-width="0.6" filter="url(#sh)"/>
  <circle cx="827.5" cy="432.4" r="15.2" fill="#f4f4f4" filter="url(#sh)"/>
  <circle cx="827.5" cy="432.4" r="13.8" fill="#48c25a"/>
  <text x="827.6" y="435.8" text-anchor="middle" style="font-family:'Liberation Sans',sans-serif;font-size:9.5px;fill:#fff">74%</text>
  <path d="M846.2 428h3.6l-1.8-2.2z M847.4 428v2.2h1.2V428z" fill="#f07070"/>
  <path d="M846.2 437h3.6l-1.8 2.2z M847.4 437v-2.6h1.2V437z" fill="#3aaa50"/>
  <text x="876" y="430.5" text-anchor="end" style="font-family:'Liberation Sans',sans-serif;font-size:6.5px;fill:#222">0K/s</text>
  <text x="876" y="440" text-anchor="end" style="font-family:'Liberation Sans',sans-serif;font-size:6.5px;fill:#222">0K/s</text>
  <circle cx="884.8" cy="433" r="5.5" fill="#3a86e0"/>
  <path d="M882 433h5.6M884.8 430.2v5.6" stroke="#fff" stroke-width="1.1"/>
  <circle cx="889" cy="428.5" r="2.4" fill="#e03030" stroke="#fff" stroke-width="0.5"/>
  <rect x="780.5" y="411.3" width="107" height="14.5" fill="#fff"/>
  <g transform="translate(774.8,417.8) rotate(-12)"><rect x="-8.2" y="-8.2" width="16.4" height="16.4" rx="2.5" fill="#f25a1e"/><path d="M5 -4.2Q3.5 -5.6 -0.5 -5.4Q-5.2 -5 -5 -2Q-4.6 0 0 0.4Q3.8 0.8 3.2 2.6Q2.6 4.6 -1.5 4.4Q-4.4 4.2 -5.6 3" stroke="#fff" stroke-width="2.4" fill="none" stroke-linecap="round"/></g>
  <path d="M788.5 416.3h8.5v4.5h-8.5zM792.75 413.8v10" stroke="#1f6fd0" stroke-width="1.3" fill="none"/>
  <path d="M810.8 413.8A5.4 5.4 0 0 1 802.8 421.8A8.5 8.5 0 0 0 810.8 413.8Z" fill="#1f6fd0"/>
  <circle cx="818.3" cy="416.6" r="1.1" fill="none" stroke="#1f6fd0" stroke-width="0.9"/>
  <circle cx="822.6" cy="419.8" r="1.2" fill="#1f6fd0"/><path d="M823.6 420q0.2 2 -1.8 3.3" stroke="#1f6fd0" stroke-width="1" fill="none"/>
  <rect x="834.5" y="412.5" width="3.6" height="7" rx="1.8" fill="#1f6fd0"/>
  <path d="M833 417.5a3.3 3.3 0 0 0 6.6 0M836.3 421v2.5M834 423.5h4.6" stroke="#1f6fd0" stroke-width="0.8" fill="none"/>
  <rect x="845.6" y="414.6" width="9.6" height="6.6" rx="0.8" fill="#dbe9fb" stroke="#1f6fd0" stroke-width="1.1"/>
  <path d="M846.8 416.4h7.2M846.8 418.2h7.2" stroke="#1f6fd0" stroke-width="0.7" stroke-dasharray="0.9 0.6"/><path d="M847.8 419.9h5" stroke="#1f6fd0" stroke-width="0.7"/>
  <path d="M860 414.5l3-1.5h4l3 1.5l-1 2.5h-1.5v6h-5v-6h-1.5z" fill="#1f6fd0"/>
  <path d="M874.5 423.5l5 -5a2.8 2.8 0 0 0 3.8 -3.6l-1.8 1.6l-1.4 -1.4l1.6 -1.8a2.8 2.8 0 0 0 -3.6 3.8l-5 5z" fill="#1f6fd0"/>
</svg>
<!-- scrollbar arrows -->
<svg class="abs" style="left:401px;top:454px" width="499" height="11"><path d="M7.5 3l-2.5 2.5l2.5 2.5" stroke="#444" stroke-width="1.1" fill="none"/><path d="M490.5 3l2.5 2.5l-2.5 2.5" stroke="#333" stroke-width="1.2" fill="none"/></svg>
</body></html>
